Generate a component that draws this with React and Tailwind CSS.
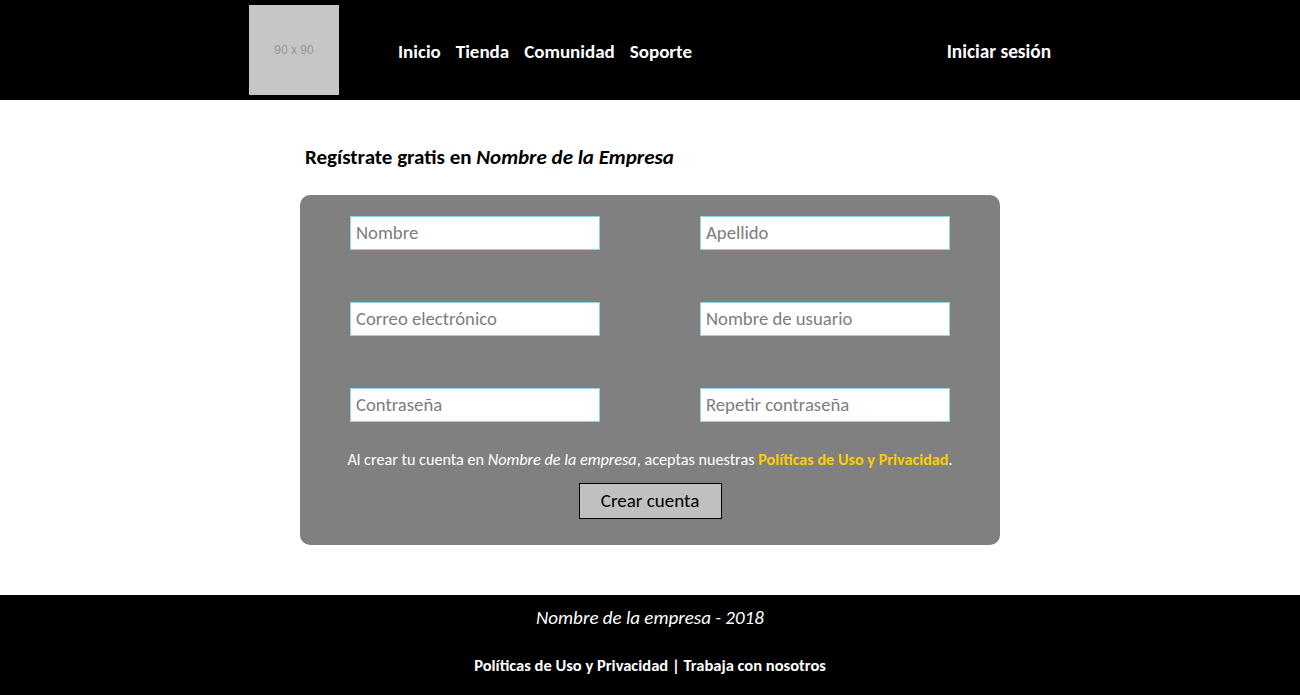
export default function App() {
  const font = "font-['Carlito','Lato','Open_Sans',sans-serif]";
  const inputCls =
    "w-[250px] h-[34px] border border-[#8fd3e6] bg-white px-[5px] pb-[2px] text-[18.7px] text-[#555] placeholder:text-[#7d7d7d] outline-none " +
    font;

  return (
    <div className={"min-h-[695px] bg-white " + font}>
      {/* header */}
      <header className="bg-black h-[100px]">
        <div className="w-[802px] mx-auto h-full flex items-center">
          <div className="w-[90px] h-[90px] bg-[#c6c6c6] flex items-center justify-center text-[12px] text-[#969696] font-['Liberation_Sans',sans-serif]">
            90 x 90
          </div>
          <nav className="ml-[59px] mt-[4px] flex gap-[15px] text-white font-bold text-[19px]">
            <a>Inicio</a>
            <a>Tienda</a>
            <a>Comunidad</a>
            <a>Soporte</a>
          </nav>
          <a className="ml-auto mt-[4px] text-white font-bold text-[19.3px]">Iniciar sesión</a>
        </div>
      </header>

      {/* main */}
      <main className="w-[700px] mx-auto pt-[44px] pb-[50px]">
        <h1 className="pl-[5px] text-[21px] font-bold text-black leading-[26px]">
          Regístrate gratis en <i>Nombre de la Empresa</i>
        </h1>
        <div className="mt-[25px] bg-[#808080] rounded-[10px] px-[50px] pt-[21px] pb-[26px]">
          <div className="grid grid-cols-2 gap-x-[100px] gap-y-[52px]">
            <input className={inputCls} placeholder="Nombre" />
            <input className={inputCls} placeholder="Apellido" />
            <input className={inputCls} placeholder="Correo electrónico" />
            <input className={inputCls} placeholder="Nombre de usuario" />
            <input className={inputCls} type="password" placeholder="Contraseña" />
            <input className={inputCls} type="password" placeholder="Repetir contraseña" />
          </div>
          <p className="-mx-[40px] mt-[28px] whitespace-nowrap text-center text-white text-[16.2px] leading-[20px]">
            Al crear tu cuenta en <i>Nombre de la empresa</i>, aceptas nuestras{" "}
            <b className="text-[#ffcc00]">Políticas de Uso y Privacidad</b>.
          </p>
          <div className="mt-[13px] flex justify-center">
            <button className="w-[143px] h-[36px] bg-[#c0c0c0] border border-black text-[19px] text-black">
              Crear cuenta
            </button>
          </div>
        </div>
      </main>

      {/* footer */}
      <footer className="bg-black h-[100px] text-white text-center">
        <p className="pt-[11px] italic text-[19px] leading-[24px]">Nombre de la empresa - 2018</p>
        <p className="mt-[25px] font-bold text-[16.5px] leading-[20px]">
          Políticas de Uso y Privacidad | Trabaja con nosotros
        </p>
      </footer>
    </div>
  );
}
